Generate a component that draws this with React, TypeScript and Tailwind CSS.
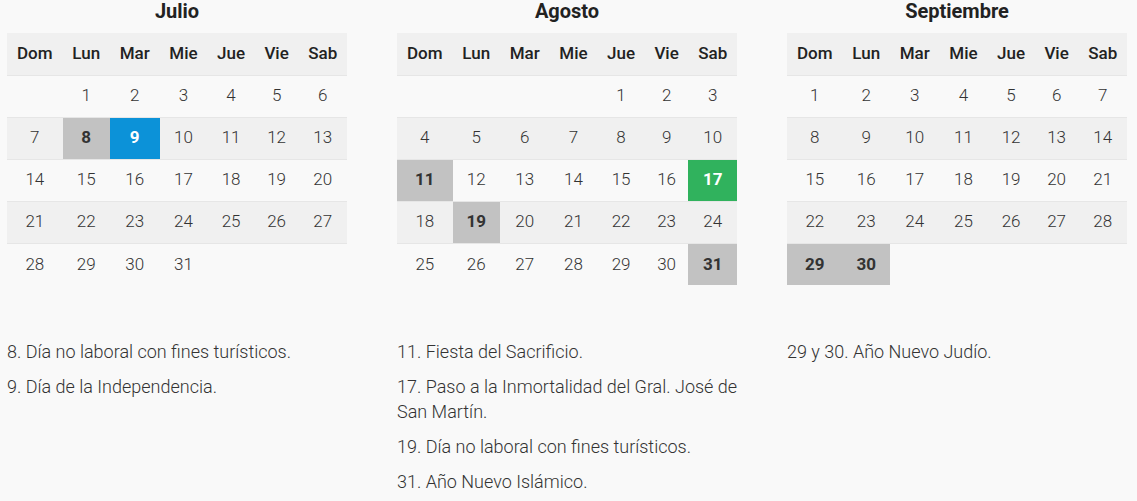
const DAYS = ['Dom', 'Lun', 'Mar', 'Mie', 'Jue', 'Vie', 'Sab'];

type Mark = 'gray' | 'blue' | 'green';

type Month = {
    name: string;
    offset: number;
    total: number;
    marks: Record<number, Mark>;
    notes: string[];
};

const MONTHS: Month[] = [
    {
        name: 'Julio',
        offset: 1,
        total: 31,
        marks: { 8: 'gray', 9: 'blue' },
        notes: ['8. Día no laboral con fines turísticos.', '9. Día de la Independencia.'],
    },
    {
        name: 'Agosto',
        offset: 4,
        total: 31,
        marks: { 11: 'gray', 17: 'green', 19: 'gray', 31: 'gray' },
        notes: [
            '11. Fiesta del Sacrificio.',
            '17. Paso a la Inmortalidad del Gral. José de San Martín.',
            '19. Día no laboral con fines turísticos.',
            '31. Año Nuevo Islámico.',
        ],
    },
    {
        name: 'Septiembre',
        offset: 0,
        total: 30,
        marks: { 29: 'gray', 30: 'gray' },
        notes: ['29 y 30. Año Nuevo Judío.'],
    },
];

const markClass = (mark?: Mark) => {
    if (mark === 'gray') return 'bg-[#c2c2c2] font-bold text-[#222]';
    if (mark === 'blue') return 'bg-[#0c92d8] font-bold text-white';
    if (mark === 'green') return 'bg-[#30b25d] font-bold text-white';
    return 'font-light';
};

const MonthTable = ({ month }: { month: Month }) => {
    const cells: (number | null)[] = [];
    for (let i = 0; i < month.offset; i++) cells.push(null);
    for (let d = 1; d <= month.total; d++) cells.push(d);
    while (cells.length % 7 !== 0) cells.push(null);

    const weeks: (number | null)[][] = [];
    for (let i = 0; i < cells.length; i += 7) weeks.push(cells.slice(i, i + 7));

    return (
        <div className="w-[340px]">
            <h2 className="mb-[10px] text-center text-[20px] font-bold leading-[23px] text-[#222]">
                {month.name}
            </h2>
            <table className="w-full border-collapse">
                <thead>
                    <tr className="bg-[#f0f0f0]">
                        {DAYS.map((day) => (
                            <th
                                key={day}
                                className="h-[42px] px-2 text-center text-[17px] font-medium text-[#222]"
                            >
                                {day}
                            </th>
                        ))}
                    </tr>
                </thead>
                <tbody>
                    {weeks.map((week, w) => (
                        <tr
                            key={w}
                            className={`border-t border-[#e6e6e6] ${w % 2 === 1 ? 'bg-[#f0f0f0]' : ''}`}
                        >
                            {week.map((day, i) => (
                                <td
                                    key={i}
                                    className={`h-[42px] px-2 text-center text-[17px] text-[#333] ${
                                        day ? markClass(month.marks[day]) : ''
                                    } ${day === null && w === weeks.length - 1 ? 'bg-[#f9f9f9]' : ''}`}
                                >
                                    {day ?? ''}
                                </td>
                            ))}
                        </tr>
                    ))}
                </tbody>
            </table>
            <div className="mt-[54px] flex w-[346px] flex-col gap-[10px]">
                {month.notes.map((note) => (
                    <p key={note} className="text-[18px] font-light leading-[25px] text-[#333]">
                        {note}
                    </p>
                ))}
            </div>
        </div>
    );
};

export default function App() {
    return (
        <div
            className="min-h-screen bg-[#f9f9f9] pl-[7px]"
            style={{ fontFamily: 'Roboto, "Liberation Sans", sans-serif' }}
        >
            <div className="flex items-start gap-[50px]">
                {MONTHS.map((month) => (
                    <MonthTable key={month.name} month={month} />
                ))}
            </div>
        </div>
    );
}
